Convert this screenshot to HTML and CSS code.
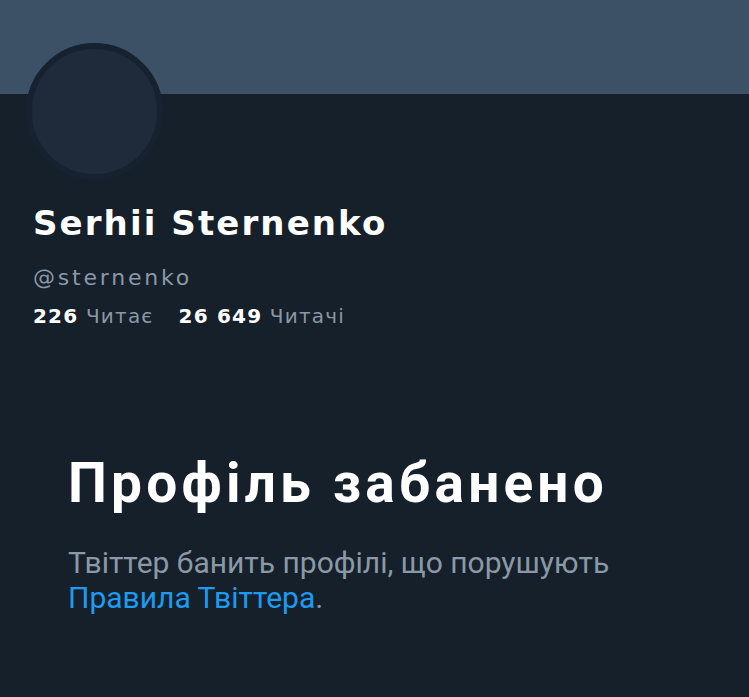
FILE: index.html
```html
<!DOCTYPE html>
<html lang="uk">
<head>
<meta charset="utf-8">
<title>Serhii Sternenko</title>
<link rel="stylesheet" href="styles.css">
</head>
<body>
<div class="banner"></div>
<section class="profile">
  <div class="avatar"></div>
  <h1 class="name">Serhii Sternenko</h1>
  <div class="handle">@sternenko</div>
  <div class="stats">
    <span class="stat"><b>226</b> Читає</span>
    <span class="stat"><b>26 649</b> Читачі</span>
  </div>
</section>
<section class="banned">
  <h2 class="title">Профіль забанено</h2>
  <p class="desc">Твіттер банить профілі, що порушують <a href="#">Правила Твіттера</a>.</p>
</section>
</body>
</html>
```
FILE: styles.css
```css
html, body {
  margin: 0;
  padding: 0;
  background: #15202b;
  height: 100%;
}
body {
  font-family: "DejaVu Sans", sans-serif;
  color: #ffffff;
  overflow: hidden;
}
.banner {
  height: 94px;
  background: #3c5166;
}
.profile {
  padding-left: 26px;
}
.avatar {
  width: 125px;
  height: 125px;
  border-radius: 50%;
  border: 6px solid #172231;
  background: #1f2a3b;
  margin-top: -51px;
}
.name {
  margin: 23px 0 0 7px;
  font-family: "DejaVu Sans", sans-serif;
  font-weight: 700;
  font-size: 34px;
  letter-spacing: 2.1px;
  line-height: 40px;
}
.handle {
  margin: 20px 0 0 7px;
  font-size: 22px;
  line-height: 30px;
  color: #8b98a5;
  letter-spacing: 2.8px;
}
.stats {
  margin: 10px 0 0 7px;
  display: flex;
  gap: 25px;
  font-size: 20px;
  line-height: 26px;
  color: #8b98a5;
  letter-spacing: 1.2px;
}
.stat b {
  color: #ffffff;
  font-weight: 700;
}
.banned {
  padding: 122px 0 0 68px;
  font-family: Roboto, "Liberation Sans", sans-serif;
}
.title {
  margin: 0;
  font-size: 55px;
  font-weight: 700;
  line-height: 64px;
  letter-spacing: 4.2px;
}
.desc {
  margin: 30px 0 0;
  font-size: 30px;
  line-height: 35px;
  color: #8b98a5;
  max-width: 600px;
}
.desc a {
  color: #1d9bf0;
  text-decoration: none;
}
```
